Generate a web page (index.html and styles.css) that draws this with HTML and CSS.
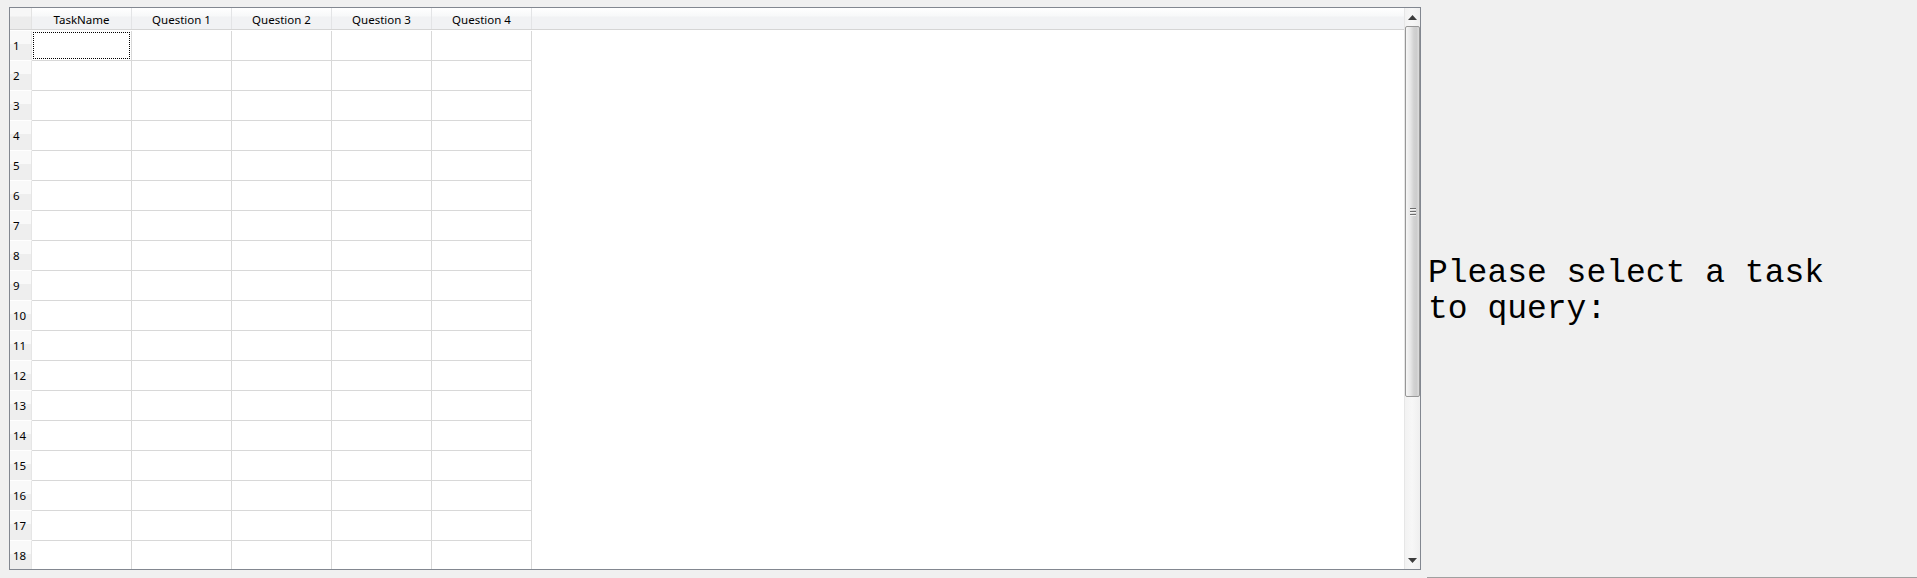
FILE: index.html
```html
<!DOCTYPE html>
<html>
<head>
<meta charset="utf-8">
<title>Task query</title>
<link rel="stylesheet" href="styles.css">
</head>
<body>
<div class="frame">
  <div class="view">
    <div class="hdr">
      <div class="corner"></div>
      <div class="hcell">TaskName</div>
      <div class="hcell">Question 1</div>
      <div class="hcell">Question 2</div>
      <div class="hcell">Question 3</div>
      <div class="hcell">Question 4</div>
      <div class="hfill"></div>
    </div>
    <div class="rows">
      <div class="row"><div class="rnum">1</div><div class="cell"><div class="focus"></div></div><div class="cell"></div><div class="cell"></div><div class="cell"></div><div class="cell"></div></div>
      <div class="row"><div class="rnum">2</div><div class="cell"></div><div class="cell"></div><div class="cell"></div><div class="cell"></div><div class="cell"></div></div>
      <div class="row"><div class="rnum">3</div><div class="cell"></div><div class="cell"></div><div class="cell"></div><div class="cell"></div><div class="cell"></div></div>
      <div class="row"><div class="rnum">4</div><div class="cell"></div><div class="cell"></div><div class="cell"></div><div class="cell"></div><div class="cell"></div></div>
      <div class="row"><div class="rnum">5</div><div class="cell"></div><div class="cell"></div><div class="cell"></div><div class="cell"></div><div class="cell"></div></div>
      <div class="row"><div class="rnum">6</div><div class="cell"></div><div class="cell"></div><div class="cell"></div><div class="cell"></div><div class="cell"></div></div>
      <div class="row"><div class="rnum">7</div><div class="cell"></div><div class="cell"></div><div class="cell"></div><div class="cell"></div><div class="cell"></div></div>
      <div class="row"><div class="rnum">8</div><div class="cell"></div><div class="cell"></div><div class="cell"></div><div class="cell"></div><div class="cell"></div></div>
      <div class="row"><div class="rnum">9</div><div class="cell"></div><div class="cell"></div><div class="cell"></div><div class="cell"></div><div class="cell"></div></div>
      <div class="row"><div class="rnum">10</div><div class="cell"></div><div class="cell"></div><div class="cell"></div><div class="cell"></div><div class="cell"></div></div>
      <div class="row"><div class="rnum">11</div><div class="cell"></div><div class="cell"></div><div class="cell"></div><div class="cell"></div><div class="cell"></div></div>
      <div class="row"><div class="rnum">12</div><div class="cell"></div><div class="cell"></div><div class="cell"></div><div class="cell"></div><div class="cell"></div></div>
      <div class="row"><div class="rnum">13</div><div class="cell"></div><div class="cell"></div><div class="cell"></div><div class="cell"></div><div class="cell"></div></div>
      <div class="row"><div class="rnum">14</div><div class="cell"></div><div class="cell"></div><div class="cell"></div><div class="cell"></div><div class="cell"></div></div>
      <div class="row"><div class="rnum">15</div><div class="cell"></div><div class="cell"></div><div class="cell"></div><div class="cell"></div><div class="cell"></div></div>
      <div class="row"><div class="rnum">16</div><div class="cell"></div><div class="cell"></div><div class="cell"></div><div class="cell"></div><div class="cell"></div></div>
      <div class="row"><div class="rnum">17</div><div class="cell"></div><div class="cell"></div><div class="cell"></div><div class="cell"></div><div class="cell"></div></div>
      <div class="row"><div class="rnum">18</div><div class="cell"></div><div class="cell"></div><div class="cell"></div><div class="cell"></div><div class="cell"></div></div>
    </div>
  </div>
  <div class="vscroll">
    <div class="arrow"><svg width="9" height="5" viewBox="0 0 9 5"><path d="M4.5 0 L9 5 L0 5 Z" fill="#3c3c3c"/></svg></div>
    <div class="thumb">
      <div class="grip"><span></span><span></span><span></span></div>
    </div>
    <div class="track"></div>
    <div class="arrow"><svg width="9" height="5" viewBox="0 0 9 5"><path d="M0 0 L9 0 L4.5 5 Z" fill="#3c3c3c"/></svg></div>
  </div>
</div>
<div class="panel">
  <div class="msgwrap">
    <p class="msg">Please select a task to query:</p>
  </div>
  <div class="bottomline"></div>
</div>
</body>
</html>
```

FILE: styles.css
```css
html, body {
  margin: 0;
  padding: 0;
}
body {
  background: #f0f0f0;
  width: 1917px;
  height: 578px;
  overflow: hidden;
  display: flex;
  align-items: flex-start;
  font-family: "Segoe UI", "Noto Sans", "Liberation Sans", sans-serif;
}
.frame {
  margin: 7px 0 0 9px;
  width: 1412px;
  height: 563px;
  box-sizing: border-box;
  border: 1px solid #828790;
  background: #ffffff;
  display: flex;
  flex-shrink: 0;
}
.view {
  flex: 1;
  display: flex;
  flex-direction: column;
  overflow: hidden;
}
.hdr {
  display: flex;
  height: 22px;
  box-sizing: border-box;
  border-bottom: 1px solid #d5d5d5;
  background: linear-gradient(#ffffff 0%, #f7f8f9 40%, #f1f2f4 41%, #f1f2f4 100%);
  flex-shrink: 0;
}
.corner {
  width: 22px;
  box-sizing: border-box;
  border-right: 1px solid #e3e3e3;
  background: linear-gradient(#f7f7f7 0%, #f7f7f7 40%, #ececec 41%, #ececec 100%);
}
.hcell {
  width: 100px;
  box-sizing: border-box;
  border-right: 1px solid #e3e4e6;
  font-size: 11.5px;
  line-height: 23px;
  height: 21px;
  overflow: hidden;
  text-align: center;
  color: #000;
}
.hfill {
  flex: 1;
}
.rows {
  padding-top: 1px;
  display: flex;
  flex-direction: column;
}
.row {
  display: flex;
  height: 30px;
  flex-shrink: 0;
}
.rnum {
  width: 22px;
  box-sizing: border-box;
  padding-left: 3px;
  border-right: 1px solid #e6e6e6;
  border-bottom: 1px solid #ffffff;
  background: linear-gradient(#f9f9f9 0%, #f9f9f9 45%, #eeeeee 46%, #eeeeee 100%);
  font-size: 11.5px;
  line-height: 30px;
  color: #000;
}
.cell {
  width: 100px;
  box-sizing: border-box;
  border-right: 1px solid #d8d8d8;
  border-bottom: 1px solid #d8d8d8;
  padding: 1px;
}
.focus {
  height: 100%;
  box-sizing: border-box;
  border: 1px dotted #000;
}
.vscroll {
  width: 16px;
  flex-shrink: 0;
  display: flex;
  flex-direction: column;
  background: linear-gradient(to right, #e6e6e6 0px, #e6e6e6 1px, #f2f2f2 1px, #f7f7f7 8px, #efefef 100%);
}
.arrow {
  height: 18px;
  display: flex;
  align-items: center;
  justify-content: center;
  flex-shrink: 0;
}
.arrow svg {
  display: block;
}
.thumb {
  height: 371px;
  box-sizing: border-box;
  margin: 0 0 0 1px;
  border: 1px solid #979797;
  border-radius: 2px;
  background: linear-gradient(to right, #f6f6f6 0%, #e6e6e6 35%, #d2d2d2 60%, #cdcdcd 80%, #dcdcdc 100%);
  display: flex;
  align-items: center;
  justify-content: center;
  flex-shrink: 0;
}
.grip {
  display: flex;
  flex-direction: column;
  gap: 1px;
}
.grip span {
  display: block;
  width: 6px;
  height: 1px;
  background: #6e6e6e;
  border-bottom: 1px solid #f4f4f4;
}
.track {
  flex: 1;
}
.panel {
  flex: 1;
  height: 578px;
  display: flex;
  flex-direction: column;
}
.msgwrap {
  flex: 1;
  display: flex;
  align-items: center;
  padding-left: 7px;
  padding-top: 6px;
}
.msg {
  margin: 0;
  width: 440px;
  font-family: "Liberation Mono", "Courier New", monospace;
  font-size: 33px;
  line-height: 36px;
  color: #000;
}
.bottomline {
  height: 1px;
  margin-left: 6px;
  background: #a0a0a0;
}
```
